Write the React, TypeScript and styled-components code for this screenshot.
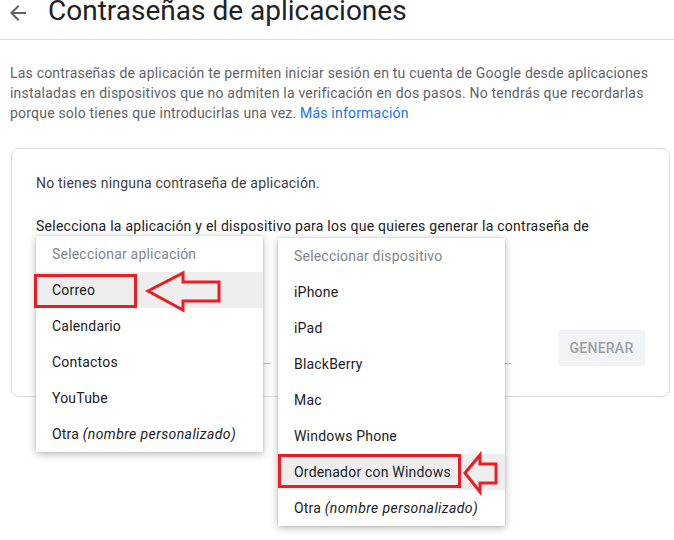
import React from 'react';
import styled, { createGlobalStyle } from 'styled-components';

const GlobalStyle = createGlobalStyle`
  body {
    margin: 0;
    background: #ffffff;
    font-family: Roboto, "Liberation Sans", Arial, sans-serif;
  }
`;

const Page = styled.div`
  position: relative;
  width: 674px;
  height: 540px;
  overflow: hidden;
  background: #ffffff;
`;

const Header = styled.header`
  display: flex;
  align-items: flex-start;
  height: 39px;
  border-bottom: 1px solid #dadce0;
`;

const BackButton = styled.div`
  width: 24px;
  height: 24px;
  margin: 1px 0 0 6px;
  color: #5f6368;
`;

const Title = styled.h1`
  margin: -3px 0 0 18px;
  font-size: 28px;
  line-height: 28px;
  font-weight: 400;
  color: #202124;
`;

const Intro = styled.p`
  margin: 23px 10px 0 10px;
  font-size: 14px;
  line-height: 20px;
  letter-spacing: 0.2px;
  color: #5f6368;
`;

const Link = styled.a`
  color: #1a73e8;
  text-decoration: none;
`;

const Card = styled.section`
  margin: 25px 0 0 11px;
  width: 659px;
  height: 249px;
  border: 1px solid #dadce0;
  border-radius: 8px;
  padding: 24px 24px 0;
  box-sizing: border-box;
`;

const Text = styled.p<{ $strong?: boolean }>`
  margin: 0 0 ${p => (p.$strong ? '74px' : '23px')};
  font-size: 14px;
  line-height: 20px;
  letter-spacing: ${p => (p.$strong ? '0.25px' : '0.2px')};
  color: ${p => (p.$strong ? '#202124' : '#3c4043')};
`;

const FormRow = styled.div`
  display: flex;
  align-items: flex-start;
  gap: 10px;
`;

const Select = styled.div<{ $width: number }>`
  width: ${p => p.$width}px;
  height: 33px;
  border-bottom: 1px solid #bdc1c6;
`;

const GenerateButton = styled.button`
  margin-left: auto;
  width: 87px;
  height: 36px;
  border: none;
  border-radius: 4px;
  background: #f1f3f4;
  color: #9aa0a6;
  font-family: Roboto, "Liberation Sans", Arial, sans-serif;
  font-size: 14px;
  font-weight: 500;
  letter-spacing: 0.25px;
`;

const Menu = styled.ul<{ $left: number; $top: number }>`
  position: absolute;
  left: ${p => p.$left}px;
  top: ${p => p.$top}px;
  width: 227px;
  margin: 0;
  padding: 0;
  list-style: none;
  background: #ffffff;
  box-shadow: 0 2px 8px rgba(0, 0, 0, 0.28), 0 0 2px rgba(0, 0, 0, 0.12);
`;

const MenuItem = styled.li<{ $placeholder?: boolean; $active?: boolean }>`
  height: 36px;
  padding: 0 16px;
  line-height: 36px;
  font-size: 14px;
  letter-spacing: 0.2px;
  color: ${p => (p.$placeholder ? '#80868b' : '#202124')};
  background: ${p => (p.$active ? '#eeeeee' : 'transparent')};
  white-space: nowrap;
`;

const Note = styled.i`
  font-style: italic;
  letter-spacing: 0.4px;
`;

const MarkBox = styled.div<{ $left: number; $top: number; $width: number; $height: number }>`
  position: absolute;
  left: ${p => p.$left}px;
  top: ${p => p.$top}px;
  width: ${p => p.$width}px;
  height: ${p => p.$height}px;
  border: 3px solid #ed1c24;
  box-sizing: border-box;
`;

const Overlay = styled.svg`
  position: absolute;
  left: 0;
  top: 0;
  pointer-events: none;
`;

const apps = ['Correo', 'Calendario', 'Contactos', 'YouTube'];
const devices = ['iPhone', 'iPad', 'BlackBerry', 'Mac', 'Windows Phone', 'Ordenador con Windows'];

const App: React.FC = () => {
  return (
    <Page>
      <GlobalStyle />
      <Header>
        <BackButton>
          <svg width="24" height="24" viewBox="0 0 24 24">
            <path d="M20 11H7.83l5.59-5.59L12 4l-8 8 8 8 1.41-1.41L7.83 13H20v-2z" fill="currentColor" />
          </svg>
        </BackButton>
        <Title>Contraseñas de aplicaciones</Title>
      </Header>
      <Intro>
        Las contraseñas de aplicación te permiten iniciar sesión en tu cuenta de Google desde aplicaciones
        instaladas en dispositivos que no admiten la verificación en dos pasos. No tendrás que recordarlas
        porque solo tienes que introducirlas una vez. <Link href="#">Más información</Link>
      </Intro>
      <Card>
        <Text>No tienes ninguna contraseña de aplicación.</Text>
        <Text $strong>
          Selecciona la aplicación y el dispositivo para los que quieres generar la contraseña de aplicación.
        </Text>
        <FormRow>
          <Select $width={235} />
          <Select $width={230} />
          <GenerateButton>GENERAR</GenerateButton>
        </FormRow>
      </Card>

      <Menu $left={36} $top={236}>
        <MenuItem $placeholder>Seleccionar aplicación</MenuItem>
        {apps.map((app, i) => (
          <MenuItem key={app} $active={i === 0}>{app}</MenuItem>
        ))}
        <MenuItem>Otra <Note>(nombre personalizado)</Note></MenuItem>
      </Menu>

      <Menu $left={278} $top={238}>
        <MenuItem $placeholder>Seleccionar dispositivo</MenuItem>
        {devices.map(d => (
          <MenuItem key={d} $active={d === 'Ordenador con Windows'}>{d}</MenuItem>
        ))}
        <MenuItem>Otra <Note>(nombre personalizado)</Note></MenuItem>
      </Menu>

      <MarkBox $left={34} $top={274} $width={103} $height={34} />
      <MarkBox $left={278} $top={454} $width={183} $height={34} />
      <Overlay width="674" height="540" viewBox="0 0 674 540">
        <polygon
          points="148,291 183,273 183,282 219,282 219,301 183,301 183,310"
          fill="none"
          stroke="#ed1c24"
          strokeWidth="3"
        />
        <polygon
          points="465,473 480,455 480,464 496,464 496,483 480,483 480,492"
          fill="none"
          stroke="#ed1c24"
          strokeWidth="3"
        />
      </Overlay>
    </Page>
  );
};

export default App;
